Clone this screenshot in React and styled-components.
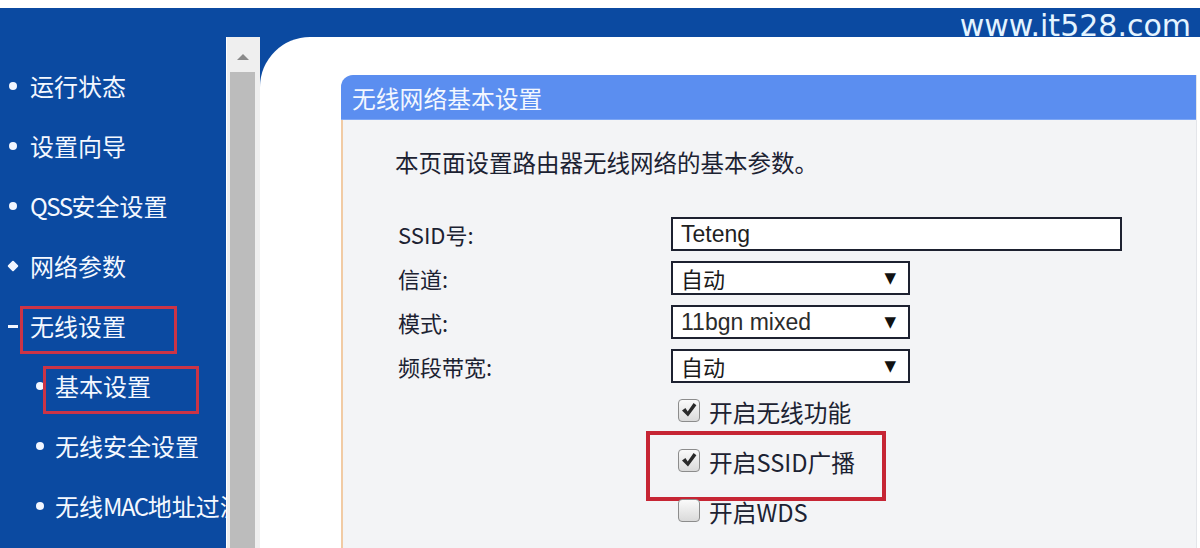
import React from "react";
import styled, { createGlobalStyle } from "styled-components";

const GlobalStyle = createGlobalStyle`
  html, body {
    margin: 0;
    padding: 0;
    background: #ffffff;
    overflow: hidden;
  }
  * {
    box-sizing: border-box;
  }
`;

const cjk = `"Noto Sans CJK SC", "Noto Sans", sans-serif`;

const Page = styled.div`
  position: relative;
  width: 1200px;
  height: 548px;
  padding-top: 8px;
  background: #ffffff;
  overflow: hidden;
  font-family: ${cjk};
`;

const Frame = styled.div`
  height: 540px;
  display: flex;
  flex-direction: column;
  background: #0b4aa1;
`;

const TopBand = styled.div`
  height: 29px;
  flex-shrink: 0;
`;

const Watermark = styled.span`
  position: absolute;
  top: 11px;
  right: 9px;
  font-family: "DejaVu Sans", sans-serif;
  font-size: 30px;
  line-height: 1;
  color: #e4f4ff;
`;

const Body = styled.div`
  flex: 1;
  min-height: 0;
  display: flex;
`;

const Sidebar = styled.nav`
  width: 226px;
  flex-shrink: 0;
  padding-top: 19px;
  overflow: hidden;
`;

const MenuItem = styled.div`
  height: 60px;
  display: flex;
  align-items: center;
  padding-left: ${(p) => (p.$sub ? 35 : 8)}px;
  white-space: nowrap;
`;

const Bullet = styled.span`
  width: 10px;
  height: 10px;
  flex-shrink: 0;
  margin-right: ${(p) => (p.$sub ? 10 : 12)}px;
  display: flex;
  align-items: center;
  justify-content: center;

  &::before {
    content: "";
    display: block;
    background: #f2f6ff;
    ${(p) =>
      p.$kind === "dash"
        ? "width: 10px; height: 3px;"
        : p.$kind === "diamond"
        ? "width: 8px; height: 8px; transform: rotate(45deg); border-radius: 1px;"
        : "width: 8px; height: 8px; border-radius: 50%;"}
  }
`;

const MenuLabel = styled.span`
  position: relative;
  font-size: 24px;
  line-height: 30px;
  color: #f4f8ff;

  ${(p) =>
    p.$marked &&
    `
    &::after {
      content: "";
      position: absolute;
      left: ${p.$sub ? -12 : -10}px;
      top: -5px;
      width: ${p.$sub ? 150 : 151}px;
      height: 42px;
      border: 3px solid #cc3446;
    }
  `}
`;

const Latin = styled.span`
  letter-spacing: -1.5px;
`;

const Scrollbar = styled.div`
  width: 34px;
  flex-shrink: 0;
  display: flex;
  flex-direction: column;
  background: #efefef;
  border-left: 1px solid #ffffff;
  padding: 0 5px 0 3px;
`;

const ScrollUp = styled.div`
  height: 35px;
  display: flex;
  justify-content: center;
  padding-top: 17px;

  &::before {
    content: "";
    width: 0;
    height: 0;
    border-left: 6px solid transparent;
    border-right: 6px solid transparent;
    border-bottom: 6px solid #8a8a8a;
  }
`;

const ScrollThumb = styled.div`
  flex: 1;
  background: #bcbcbc;
`;

const Content = styled.main`
  flex: 1;
  min-width: 0;
  background: #ffffff;
  border-top-left-radius: 50px;
  padding: 38px 3px 0 81px;
  overflow: hidden;
  display: flex;
`;

const Panel = styled.section`
  flex: 1;
  display: flex;
  flex-direction: column;
  background: #f3f4f6;
  border-top-left-radius: 12px;
  border-right: 1px solid #e3e5e9;
  overflow: hidden;
`;

const PanelHeader = styled.h2`
  margin: 0;
  height: 45px;
  flex-shrink: 0;
  display: flex;
  align-items: center;
  padding-left: 11px;
  background: #5b8ef0;
  border-bottom: 1px solid #7ea7f4;
  color: #f3f7ff;
  font-size: 23.8px;
  font-weight: 400;
`;

const PanelBody = styled.div`
  flex: 1;
  border-left: 2px solid #f1cba4;
  padding: 27px 0 0 52px;
  color: #1c2232;
`;

const Intro = styled.p`
  margin: 0;
  font-size: 23.5px;
  line-height: 30px;
`;

const FormGrid = styled.div`
  display: grid;
  grid-template-columns: 273px auto;
  grid-auto-rows: 44px;
  align-items: center;
  margin: 35px 0 0 3px;
`;

const Label = styled.span`
  font-size: 22px;
  line-height: 1;
`;

const TextBox = styled.div`
  width: 451px;
  height: 34px;
  display: flex;
  align-items: center;
  padding-left: 8px;
  background: #ffffff;
  border: 2px solid #1d2130;
  font-family: "Liberation Sans", Arial, sans-serif;
  font-size: 23px;
  color: #1f1f1f;
`;

const SelectBox = styled.div`
  width: 239px;
  height: 34px;
  display: flex;
  align-items: center;
  justify-content: space-between;
  padding: 0 12px 0 8px;
  background: #ffffff;
  border: 2px solid #1d2130;
  font-family: ${(p) => (p.$latin ? `"Liberation Sans", Arial, sans-serif` : cjk)};
  font-size: ${(p) => (p.$latin ? 23 : 22)}px;
  color: ${(p) => (p.$latin ? "#2b2b2b" : "#1a1a1a")};
`;

const Arrow = styled.span`
  font-family: "DejaVu Sans", sans-serif;
  font-size: 15px;
  color: #111111;
`;

const CheckList = styled.div`
  margin: -3px 0 0 283px;
  display: flex;
  flex-direction: column;
`;

const CheckRow = styled.label`
  position: relative;
  height: 50px;
  display: flex;
  align-items: center;
  gap: 9px;
  font-size: 23.7px;
  color: #1c2232;

  ${(p) =>
    p.$marked &&
    `
    &::after {
      content: "";
      position: absolute;
      left: -32px;
      top: -4px;
      width: 232px;
      height: 62px;
      border: 4px solid #c62534;
    }
  `}
`;

const CheckBox = styled.span`
  width: 22px;
  height: 23px;
  flex-shrink: 0;
  display: flex;
  align-items: center;
  justify-content: center;
  border: 1.5px solid #8c8c8c;
  border-radius: 4px;
  background: linear-gradient(#fafafa, #dadada);
`;

const CheckText = styled.span`
  padding-top: 4px;
`;

const Tick = () => (
  <svg width="16" height="16" viewBox="0 0 16 16">
    <path
      d="M1 8.6 L4.4 6 L6.7 9.4 L12.6 1 L15.4 3.2 L7 14.6 Z"
      fill="#2a2a2a"
    />
  </svg>
);

const menu = [
  { label: "运行状态", kind: "dot" },
  { label: "设置向导", kind: "dot" },
  { label: ["QSS", "安全设置"], kind: "dot" },
  { label: "网络参数", kind: "diamond" },
  { label: "无线设置", kind: "dash", marked: true },
  { label: "基本设置", kind: "dot", sub: true, marked: true },
  { label: "无线安全设置", kind: "dot", sub: true },
  { label: ["MAC", "地址过滤"], prefix: "无线", kind: "dot", sub: true },
];

const fields = [
  { label: "SSID号:", type: "text", value: "Teteng" },
  { label: "信道:", type: "select", value: "自动" },
  { label: "模式:", type: "select", value: "11bgn mixed", latin: true },
  { label: "频段带宽:", type: "select", value: "自动" },
];

const checks = [
  { label: "开启无线功能", checked: true },
  { label: "开启SSID广播", checked: true, marked: true },
  { label: "开启WDS", checked: false },
];

function MenuText({ item }) {
  if (Array.isArray(item.label)) {
    return (
      <>
        {item.prefix}
        <Latin>{item.label[0]}</Latin>
        {item.label[1]}
      </>
    );
  }
  return item.label;
}

export default function App() {
  return (
    <Page>
      <GlobalStyle />
      <Frame>
        <TopBand />
        <Body>
          <Sidebar>
            {menu.map((item, i) => (
              <MenuItem key={i} $sub={item.sub}>
                <Bullet $kind={item.kind} $sub={item.sub} />
                <MenuLabel $marked={item.marked} $sub={item.sub}>
                  <MenuText item={item} />
                </MenuLabel>
              </MenuItem>
            ))}
          </Sidebar>
          <Scrollbar>
            <ScrollUp />
            <ScrollThumb />
          </Scrollbar>
          <Content>
            <Panel>
              <PanelHeader>无线网络基本设置</PanelHeader>
              <PanelBody>
                <Intro>本页面设置路由器无线网络的基本参数。</Intro>
                <FormGrid>
                  {fields.map((f) => (
                    <React.Fragment key={f.label}>
                      <Label>{f.label}</Label>
                      {f.type === "text" ? (
                        <TextBox>{f.value}</TextBox>
                      ) : (
                        <SelectBox $latin={f.latin}>
                          <span>{f.value}</span>
                          <Arrow>▼</Arrow>
                        </SelectBox>
                      )}
                    </React.Fragment>
                  ))}
                </FormGrid>
                <CheckList>
                  {checks.map((c) => (
                    <CheckRow key={c.label} $marked={c.marked}>
                      <CheckBox>{c.checked && <Tick />}</CheckBox>
                      <CheckText>{c.label}</CheckText>
                    </CheckRow>
                  ))}
                </CheckList>
              </PanelBody>
            </Panel>
          </Content>
        </Body>
      </Frame>
      <Watermark>www.it528.com</Watermark>
    </Page>
  );
}
